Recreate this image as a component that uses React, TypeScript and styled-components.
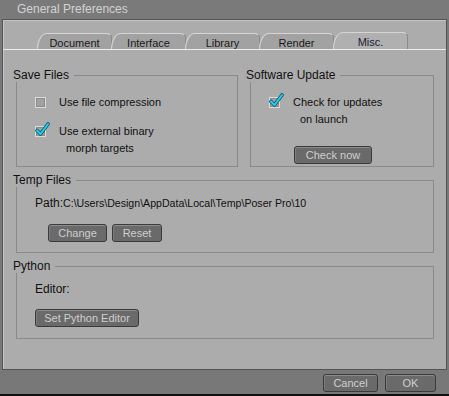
import React, { FC, ReactNode } from 'react';
import styled, { createGlobalStyle } from 'styled-components';

const GlobalStyle = createGlobalStyle`
  html, body {
    margin: 0;
    padding: 0;
    background: #000;
  }
  body {
    font-family: "Liberation Sans", Arial, sans-serif;
  }
`;

const tabs = ['Document', 'Interface', 'Library', 'Render', 'Misc.'];

interface GroupProps {
  title: string;
  children: ReactNode;
  inset?: number;
}

const Group: FC<GroupProps> = ({ title, children, inset = 3 }) => (
  <GroupWrap>
    <GroupHead>
      <GroupLabel>{title}</GroupLabel>
      <GroupRule />
    </GroupHead>
    <GroupFrame $inset={inset}>{children}</GroupFrame>
  </GroupWrap>
);

const CheckBox: FC<{ checked?: boolean }> = ({ checked }) => (
  <Box>
    {checked && (
      <CheckMark width="15" height="15" viewBox="0 0 15 15">
        <path d="M2 8.5 L5.5 12 L13 2" fill="none" stroke="#0c5a6c" strokeWidth="3.6" strokeLinecap="round" strokeLinejoin="round" />
        <path d="M2 8.5 L5.5 12 L13 2" fill="none" stroke="#22d0ee" strokeWidth="2" strokeLinecap="round" strokeLinejoin="round" />
      </CheckMark>
    )}
  </Box>
);

interface OptionProps {
  checked?: boolean;
  lines: string[];
}

const Option: FC<OptionProps> = ({ checked, lines }) => (
  <OptionRow>
    <CheckBox checked={checked} />
    <OptionText>
      {lines.map((line, idx) => (
        <OptionLine key={idx} $indent={idx > 0}>
          {line}
        </OptionLine>
      ))}
    </OptionText>
  </OptionRow>
);

export default function App() {
  return (
    <>
      <GlobalStyle />
      <Window>
        <TitleBar>General Preferences</TitleBar>
        <Panel>
          <TabBar>
            {tabs.map((tab) => (
              <Tab key={tab} $active={tab === 'Misc.'}>
                {tab}
              </Tab>
            ))}
          </TabBar>
          <Content>
            <TopRow>
              <SaveCol>
                <Group title="Save Files">
                  <Options>
                    <Option lines={['Use file compression']} />
                    <Option checked lines={['Use external binary', 'morph targets']} />
                  </Options>
                </Group>
              </SaveCol>
              <UpdateCol>
                <Group title="Software Update" inset={4}>
                  <Options>
                    <Option checked lines={['Check for updates', 'on launch']} />
                  </Options>
                  <ButtonRow $indent={25} $top={9}>
                    <Button $width={78}>Check now</Button>
                  </ButtonRow>
                </Group>
              </UpdateCol>
            </TopRow>
            <Group title="Temp Files">
              <FieldRow>
                <FieldLabel>Path:</FieldLabel>
                <PathValue>C:\Users\Design\AppData\Local\Temp\Poser Pro\10</PathValue>
              </FieldRow>
              <ButtonRow $indent={13} $top={14} $bottom={10}>
                <Button $width={59}>Change</Button>
                <Button $width={50}>Reset</Button>
              </ButtonRow>
            </Group>
            <Group title="Python">
              <FieldRow>
                <FieldLabel>Editor:</FieldLabel>
              </FieldRow>
              <ButtonRow $indent={0} $top={13} $bottom={11}>
                <Button $width={104}>Set Python Editor</Button>
              </ButtonRow>
            </Group>
          </Content>
        </Panel>
        <Footer>
          <Button $width={55}>Cancel</Button>
          <Button $width={51}>OK</Button>
        </Footer>
        <BottomEdge />
      </Window>
    </>
  );
}

const Window = styled.div`
  width: 449px;
  height: 396px;
  display: flex;
  flex-direction: column;
  background: #787878;
  overflow: hidden;
`;

const TitleBar = styled.div`
  height: 19px;
  padding-left: 17px;
  font-size: 12px;
  line-height: 19px;
  color: #d2d2d2;
  background: #7a7a7a;
`;

const Panel = styled.div`
  flex: 1;
  margin: 0 2px;
  display: flex;
  flex-direction: column;
  background: #acacac;
  border: 1px solid #555555;
  box-shadow: inset 1px 1px 0 #c4c4c4;
`;

const TabBar = styled.div`
  height: 29px;
  display: flex;
  align-items: flex-end;
  padding-left: 34px;
  border-bottom: 1px solid #ececec;
`;

const Tab = styled.div<{ $active?: boolean }>`
  width: 75px;
  height: ${({ $active }) => ($active ? 17 : 16)}px;
  box-sizing: border-box;
  text-align: center;
  font-size: 11px;
  line-height: ${({ $active }) => ($active ? 19 : 18)}px;
  color: ${({ $active }) => ($active ? '#1c1c34' : '#1a1a1a')};
  background: ${({ $active }) => ($active ? '#b0b0b0' : '#a2a2a2')};
  border: 1px solid #d6d6d6;
  border-bottom: none;
  border-right-color: #8a8a8a;
  border-radius: 10px 6px 0 0 / 16px 4px 0 0;
  margin-right: ${({ $active }) => ($active ? 0 : -1)}px;
`;

const Content = styled.div`
  display: flex;
  flex-direction: column;
  gap: 6px;
  padding: 18px 12px 0 10px;
`;

const TopRow = styled.div`
  display: flex;
  gap: 8px;
  align-items: stretch;
`;

const SaveCol = styled.div`
  width: 225px;
  display: flex;
`;

const UpdateCol = styled.div`
  flex: 1;
  display: flex;
`;

const GroupWrap = styled.div`
  flex: 1;
  display: flex;
  flex-direction: column;
`;

const GroupHead = styled.div`
  display: flex;
  height: 14px;
`;

const GroupLabel = styled.div`
  font-size: 12px;
  line-height: 14px;
  color: #111111;
`;

const GroupRule = styled.div`
  flex: 1;
  margin: 7px 0 0 5px;
  border-top: 1px solid #8a8a8a;
  border-right: 1px solid #8a8a8a;
`;

const GroupFrame = styled.div<{ $inset: number }>`
  flex: 1;
  margin-left: ${({ $inset }) => $inset}px;
  padding: 0 0 0 18px;
  border: 1px solid #8a8a8a;
  border-top: none;
`;

const Options = styled.div`
  display: flex;
  flex-direction: column;
  gap: 12px;
  padding: 12px 0 9px;
`;

const OptionRow = styled.div`
  display: flex;
  gap: 13px;
`;

const Box = styled.div`
  position: relative;
  width: 11px;
  height: 11px;
  margin-top: 3px;
  box-sizing: border-box;
  border: 1px solid #dcdcdc;
  background: #a2a2a2;
  box-shadow: inset 0 0 0 1px #8c8c8c;
  flex-shrink: 0;
`;

const CheckMark = styled.svg`
  position: absolute;
  left: -1px;
  top: -5px;
`;

const OptionText = styled.div`
  display: flex;
  flex-direction: column;
`;

const OptionLine = styled.div<{ $indent?: boolean }>`
  font-size: 11px;
  line-height: 17px;
  color: #111111;
  padding-left: ${({ $indent }) => ($indent ? 7 : 0)}px;
`;

const FieldRow = styled.div`
  display: flex;
  align-items: baseline;
  padding-top: 9px;
  height: 14px;
`;

const FieldLabel = styled.span`
  font-size: 12px;
  line-height: 14px;
  color: #111111;
`;

const PathValue = styled.span`
  font-size: 10.6px;
  line-height: 14px;
  color: #111111;
`;

const ButtonRow = styled.div<{ $indent: number; $top: number; $bottom?: number }>`
  display: flex;
  gap: 5px;
  padding: ${({ $top, $bottom = 0, $indent }) => `${$top}px 0 ${$bottom}px ${$indent}px`};
`;

const Button = styled.div<{ $width: number }>`
  width: ${({ $width }) => $width}px;
  height: 18px;
  box-sizing: border-box;
  text-align: center;
  font-size: 11px;
  line-height: 16px;
  color: #cfcfcf;
  background: #6a6a6a;
  border: 1px solid #3a3a3a;
  border-radius: 3px;
  box-shadow: inset 0 1px 0 #8c8c8c, inset 1px 0 0 #7c7c7c;
`;

const Footer = styled.div`
  height: 24px;
  box-sizing: border-box;
  display: flex;
  justify-content: flex-end;
  gap: 7px;
  padding: 4px 13px 0 0;
  background: #787878;
`;

const BottomEdge = styled.div`
  height: 2px;
  background: #111111;
`;
